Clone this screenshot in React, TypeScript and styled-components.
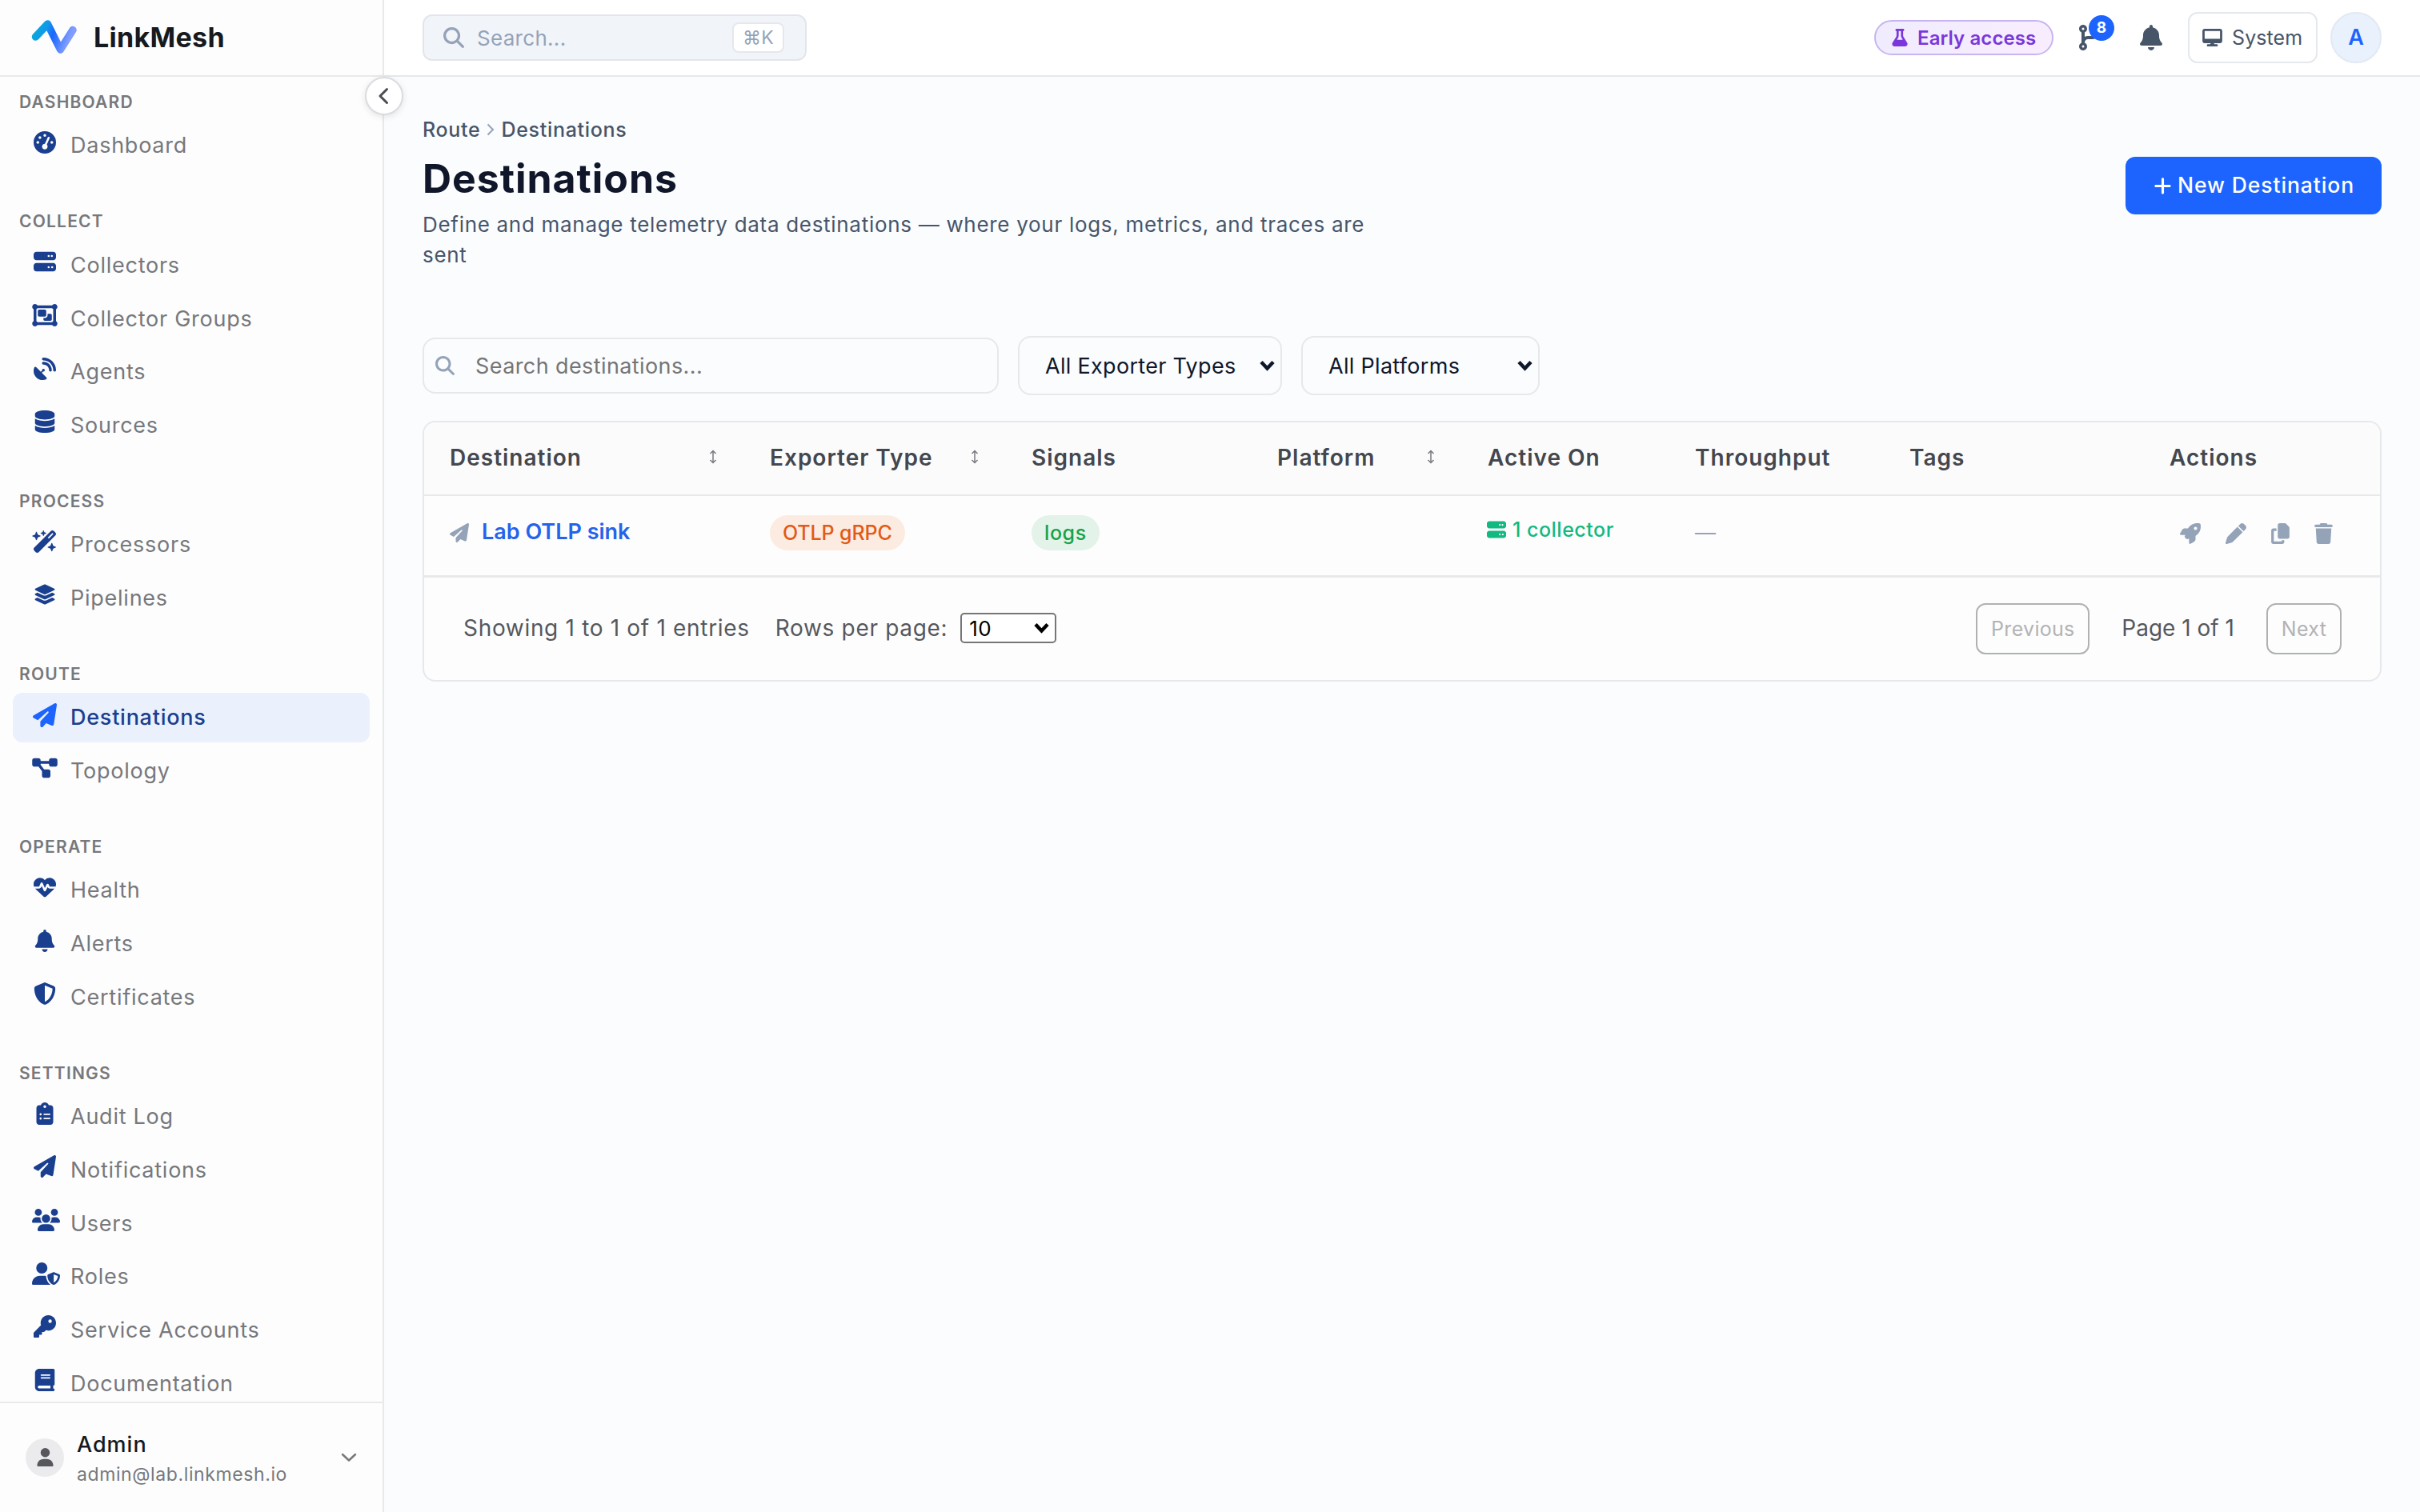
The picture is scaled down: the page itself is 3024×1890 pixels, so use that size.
import type { ReactNode } from "react";
import styled, { createGlobalStyle, css } from "styled-components";
import type { IconType } from "react-icons";
import {
  FaBell,
  FaBook,
  FaClipboardList,
  FaCodeBranch,
  FaCopy,
  FaDatabase,
  FaDesktop,
  FaDiagramProject,
  FaFlask,
  FaGaugeHigh,
  FaHeartPulse,
  FaKey,
  FaLayerGroup,
  FaMagnifyingGlass,
  FaObjectGroup,
  FaPaperPlane,
  FaPen,
  FaPlus,
  FaRocket,
  FaSatelliteDish,
  FaServer,
  FaShieldHalved,
  FaTrash,
  FaUser,
  FaUserShield,
  FaUsers,
  FaWandMagicSparkles,
} from "react-icons/fa6";

const colors = {
  primary: "#1d64ff",
  navy: "#1a3f8f",
  nav: "#76787c",
  slate: "#475569",
  muted: "#94a3b8",
  border: "#e6e8eb",
  line: "#e8e9ea",
};

const GlobalStyle = createGlobalStyle`
  * {
    box-sizing: border-box;
  }
  body {
    margin: 0;
    background: #fafcfe;
    font-family: Inter, "Liberation Sans", sans-serif;
  }
  button {
    font-family: inherit;
  }
`;

const Layout = styled.div`
  display: flex;
  width: 3024px;
  height: 1890px;
  overflow: hidden;
`;

/* sidebar */

const Sidebar = styled.aside`
  position: relative;
  display: flex;
  flex-direction: column;
  flex: none;
  width: 480px;
  height: 1890px;
  background: #fdfdfd;
  border-right: 2px solid ${colors.line};
`;

const Brand = styled.div`
  display: flex;
  align-items: center;
  flex: none;
  gap: 19px;
  height: 96px;
  padding: 0 0 2px 38px;
  border-bottom: 2px solid ${colors.line};
  font-size: 34px;
  font-weight: 700;
  letter-spacing: 0.3px;
  color: #16191f;
`;

const CollapseButton = styled.button`
  position: absolute;
  top: 96px;
  right: -26px;
  z-index: 2;
  display: flex;
  align-items: center;
  justify-content: center;
  width: 48px;
  height: 48px;
  padding: 0 3px 0 0;
  border: 2px solid #dadcde;
  border-radius: 50%;
  background: #fff;
  box-shadow: 0 2px 8px rgba(0, 0, 0, 0.1);
`;

const Nav = styled.nav`
  flex: 1;
  min-height: 0;
  overflow: hidden;
  padding: 17px 16px 0;
`;

const Section = styled.div`
  display: flex;
  flex-direction: column;
  gap: 4.7px;
  margin-bottom: 49.4px;
`;

const SectionLabel = styled.div`
  height: 30px;
  margin-bottom: 3.3px;
  padding-left: 8px;
  font-size: 21px;
  font-weight: 600;
  line-height: 30px;
  letter-spacing: 1.2px;
  color: ${colors.nav};
`;

const NavItem = styled.a<{ $active?: boolean }>`
  display: flex;
  align-items: center;
  gap: 16px;
  height: 62px;
  padding-left: 24px;
  border-radius: 12px;
  font-size: 27px;
  letter-spacing: 0.75px;
  color: ${colors.nav};

  ${(props) =>
    props.$active &&
    css`
      background: #eaf1fd;
      color: ${colors.navy};
      font-weight: 500;
    `}
`;

const NavIcon = styled.span<{ $size: number; $active?: boolean }>`
  width: 32px;
  height: 36px;
  line-height: 28px;
  text-align: center;
  white-space: nowrap;
  color: ${(props) => (props.$active ? colors.primary : colors.navy)};

  svg {
    width: ${(props) => props.$size}px;
    height: ${(props) => (props.$active ? 30 : 28)}px;
    vertical-align: top;
  }
`;

const Account = styled.div`
  display: flex;
  align-items: center;
  flex: none;
  gap: 16px;
  height: 138px;
  padding: 0 32px 1px;
  border-top: 2px solid ${colors.line};
`;

const AccountAvatar = styled.div`
  display: flex;
  align-items: center;
  justify-content: center;
  width: 48px;
  height: 48px;
  border-radius: 50%;
  background: #ebebed;
  color: #56585c;
  font-size: 23px;
`;

const AccountText = styled.div`
  flex: 1;
  padding-top: 4px;
`;

const AccountName = styled.div`
  font-size: 27px;
  font-weight: 500;
  line-height: 38px;
  letter-spacing: 1px;
  color: #16191f;
`;

const AccountMail = styled.div`
  font-size: 23px;
  line-height: 36px;
  letter-spacing: 0.6px;
  color: ${colors.nav};
`;

/* top bar */

const Main = styled.main`
  flex: 1;
  min-width: 0;
`;

const TopBar = styled.header`
  display: flex;
  align-items: center;
  height: 96px;
  padding: 0 48px;
  background: #fff;
  border-bottom: 2px solid ${colors.border};
`;

const GlobalSearch = styled.div`
  display: flex;
  align-items: center;
  width: 480px;
  height: 58px;
  margin-right: auto;
  padding: 0 26px 0 24px;
  border: 2px solid #e2e6eb;
  border-radius: 12px;
  background: #f1f5f9;
  color: ${colors.muted};
  font-size: 26px;
  letter-spacing: 0.3px;

  svg {
    margin-right: 16px;
  }
`;

const Kbd = styled.span`
  display: flex;
  align-items: center;
  justify-content: center;
  width: 65px;
  height: 38px;
  margin-left: auto;
  border: 2px solid #e5e7eb;
  border-radius: 8px;
  background: #fff;
  font-family: Inter, "DejaVu Sans", sans-serif;
  font-size: 23px;
`;

const EarlyAccess = styled.div`
  display: flex;
  align-items: center;
  gap: 11px;
  width: 224px;
  height: 44px;
  padding-left: 19px;
  border: 2px solid #c7b5f0;
  border-radius: 22px;
  background: linear-gradient(90deg, #f0ecfe, #f8edfe);
  color: #7a37da;
  font-size: 24px;
  font-weight: 600;
  letter-spacing: 0.1px;
  white-space: nowrap;
`;

const IconButton = styled.button`
  position: relative;
  display: flex;
  align-items: center;
  padding: 0;
  border: 0;
  background: none;
  color: ${colors.slate};

  svg {
    width: 28px;
    height: 32px;
  }
`;

const Count = styled.span`
  position: absolute;
  top: -12px;
  left: 12px;
  width: 32px;
  height: 32px;
  border-radius: 50%;
  background: ${colors.primary};
  color: #fff;
  font-size: 19px;
  font-weight: 700;
  line-height: 32px;
  text-align: center;
`;

const ThemeButton = styled.button`
  display: flex;
  align-items: center;
  gap: 12px;
  width: 162px;
  height: 64px;
  padding: 0 0 0 16px;
  border: 2px solid #e5e8ec;
  border-radius: 12px;
  background: #fff;
  color: ${colors.slate};
  font-size: 25px;
  letter-spacing: 0.1px;

  svg {
    width: 25px;
    height: 22px;
  }
`;

const Avatar = styled.div`
  width: 64px;
  height: 64px;
  border: 2px solid #e2e9f3;
  border-radius: 50%;
  background: #e9f1fd;
  color: ${colors.primary};
  font-size: 27px;
  font-weight: 600;
  line-height: 60px;
  text-align: center;
`;

const TopActions = styled.div`
  display: flex;
  align-items: center;
  height: 64px;

  ${IconButton}:nth-child(2) {
    margin-left: 32px;
  }
  ${IconButton}:nth-child(3) {
    margin-left: 48px;
  }
  ${ThemeButton} {
    margin: 0 16px 0 32px;
  }
`;

/* page */

const Page = styled.div`
  padding: 46px 48px 0;
`;

const Breadcrumb = styled.div`
  display: flex;
  align-items: center;
  gap: 8px;
  height: 40px;
  font-size: 25px;
  font-weight: 500;
  letter-spacing: 0.7px;
  color: ${colors.slate};
`;

const PageHead = styled.div`
  display: flex;
  justify-content: space-between;
  align-items: flex-start;
  height: 240px;
`;

const Title = styled.h1`
  margin: 9px 0 7px;
  font-size: 50px;
  font-weight: 700;
  line-height: 64px;
  letter-spacing: 0.95px;
  color: #10172a;
`;

const Description = styled.p`
  width: 1200px;
  margin: 0;
  font-size: 26px;
  line-height: 38.4px;
  letter-spacing: 0.7px;
  color: ${colors.slate};
`;

const PrimaryButton = styled.button`
  display: flex;
  align-items: center;
  justify-content: center;
  gap: 6px;
  width: 320px;
  height: 72px;
  margin-top: 14px;
  padding: 0 0 3px;
  border: 0;
  border-radius: 12px;
  background: ${colors.primary};
  color: #fff;
  font-size: 26.5px;
  font-weight: 500;
  letter-spacing: 0.9px;

  svg {
    width: 25px;
    height: 25px;
    margin-top: 4px;
  }
`;

const Filters = styled.div`
  display: flex;
  align-items: center;
  gap: 24px;
  height: 74px;
  margin-top: -2px;
`;

const TableSearch = styled.div`
  display: flex;
  align-items: center;
  gap: 26px;
  width: 720px;
  height: 70px;
  padding-left: 14px;
  border: 2px solid ${colors.border};
  border-radius: 16px;
  color: #757575;
  font-size: 27px;
  letter-spacing: 0.4px;

  svg {
    color: ${colors.muted};
  }
`;

const SelectBox = styled.div<{ $width: number; $compact?: boolean }>`
  display: flex;
  align-items: center;
  justify-content: space-between;
  width: ${(props) => props.$width}px;
  height: 74px;
  padding: 0 7px 0 32px;
  border: 2px solid ${colors.border};
  border-radius: 16px;
  color: #0f172a;
  font-size: 27px;
  letter-spacing: 0.3px;

  ${(props) =>
    props.$compact &&
    css`
      height: 38px;
      margin-bottom: 2px;
      padding: 0 7px 0 9px;
      border-color: #767676;
      border-radius: 5px;
      background: #fff;
      color: #000;
      font-size: 26px;
    `}
`;

const Card = styled.section`
  height: 326px;
  margin-top: 32px;
  overflow: hidden;
  border: 2px solid ${colors.border};
  border-radius: 16px;
  background: #fdfdfd;
`;

const TableRow = styled.div<{ $head?: boolean }>`
  display: grid;
  grid-template-columns: 400px 327px 307px 263px 259px 268px 325px 295px;
  align-items: center;
  height: ${(props) => (props.$head ? 92 : 102)}px;
  padding-bottom: ${(props) => (props.$head ? 0 : 8)}px;
  border-bottom: ${(props) => (props.$head ? 2 : 3)}px solid ${colors.line};
  background: ${(props) => (props.$head ? "#fbfbfb" : "#fdfdfd")};
`;

const HeadCell = styled.div`
  display: flex;
  align-items: center;
  justify-content: space-between;
  padding: 0 34px 2px 32px;
  font-size: 28px;
  font-weight: 600;
  letter-spacing: 1px;
  color: #44474e;

  svg {
    margin-bottom: 2px;
  }
`;

const Cell = styled.div`
  display: flex;
  align-items: center;
  padding-left: 32px;
  color: ${colors.muted};
  font-size: 26px;
`;

const NameLink = styled.a`
  margin: 0 0 2px 16px;
  color: #2563eb;
  font-size: 27px;
  font-weight: 600;
`;

const Pill = styled.span<{ $tone: "orange" | "green" }>`
  height: 44px;
  padding: 0 16px;
  border-radius: 22px;
  background: ${(props) => (props.$tone === "orange" ? "#fcebe1" : "#e3f3e9")};
  color: ${(props) => (props.$tone === "orange" ? "#e35a14" : "#16a34a")};
  font-size: 25px;
  font-weight: 500;
  line-height: 44px;
  letter-spacing: ${(props) => (props.$tone === "orange" ? -0.1 : 0.6)}px;
`;

const Collectors = styled.span`
  display: flex;
  align-items: center;
  gap: 8px;
  margin-left: -1px;
  padding-bottom: 8px;
  color: #12b981;
  font-size: 25px;
  font-weight: 500;
  letter-spacing: 0.5px;
`;

const RowActions = styled.div`
  display: flex;
  align-items: center;
  gap: 31px;
  padding: 3px 0 0 45px;
  color: ${colors.muted};

  svg {
    width: 26px;
    height: 26px;
  }
  svg:nth-child(n + 3) {
    width: 23px;
  }
`;

const TableFoot = styled.div`
  display: flex;
  align-items: center;
  height: 128px;
  padding: 0 48px 0 49px;
  font-size: 28px;
  color: #55585d;
`;

const FootText = styled.span<{ $gap: number }>`
  margin-right: ${(props) => props.$gap}px;
  padding-bottom: 3px;
  letter-spacing: 0.68px;
`;

const Pager = styled.div`
  display: flex;
  align-items: center;
  gap: 40px;
  margin-left: auto;
`;

const PageStatus = styled.span`
  padding-bottom: 3px;
`;

const PagerButton = styled.button<{ $width: number }>`
  width: ${(props) => props.$width}px;
  height: 64px;
  padding: 0;
  border: 2px solid #b0b1b3;
  border-radius: 12px;
  background: none;
  color: #b2b3b5;
  font-size: 25px;
  letter-spacing: 0.3px;
`;

const Logo = () => (
  <svg width="60" height="48" viewBox="0 0 60 48" fill="none">
    <defs>
      <linearGradient id="logo" x1="2" y1="12" x2="58" y2="34" gradientUnits="userSpaceOnUse">
        <stop offset="0" stopColor="#06b0d4" />
        <stop offset="0.3" stopColor="#1296ec" />
        <stop offset="0.46" stopColor="#1b66ff" />
        <stop offset="0.6" stopColor="#3f7bff" />
        <stop offset="0.8" stopColor="#7f9cff" />
        <stop offset="1" stopColor="#8ea2ff" />
      </linearGradient>
    </defs>
    <path
      d="M6.500 24 21.500 8 37.500 40 53 15.500"
      stroke="url(#logo)"
      strokeWidth="9.500"
      strokeLinecap="round"
      strokeLinejoin="round"
    />
  </svg>
);

const SortIcon = () => (
  <svg width="10" height="18" viewBox="0 0 10 18" fill="none" stroke="#77797e" strokeWidth="1.500">
    <path d="M5 2v14M1.500 5 5 1.500 8.500 5M1.500 13 5 16.500 8.500 13" />
  </svg>
);

const SelectArrow = () => (
  <svg width="19" height="14" viewBox="0 0 19 14" fill="none" stroke="currentColor" strokeWidth="4.500">
    <path d="M2 2.500 9.500 10.500 17 2.500" />
  </svg>
);

/* third value is the icon width, for the glyphs wider than 28px */
const sections: { label: string; items: [string, IconType, number?][] }[] = [
  { label: "DASHBOARD", items: [["Dashboard", FaGaugeHigh]] },
  {
    label: "COLLECT",
    items: [
      ["Collectors", FaServer],
      ["Collector Groups", FaObjectGroup, 32],
      ["Agents", FaSatelliteDish],
      ["Sources", FaDatabase],
    ],
  },
  {
    label: "PROCESS",
    items: [
      ["Processors", FaWandMagicSparkles, 32],
      ["Pipelines", FaLayerGroup],
    ],
  },
  {
    label: "ROUTE",
    items: [
      ["Destinations", FaPaperPlane, 30],
      ["Topology", FaDiagramProject, 32],
    ],
  },
  {
    label: "OPERATE",
    items: [
      ["Health", FaHeartPulse],
      ["Alerts", FaBell],
      ["Certificates", FaShieldHalved],
    ],
  },
  {
    label: "SETTINGS",
    items: [
      ["Audit Log", FaClipboardList],
      ["Notifications", FaPaperPlane],
      ["Users", FaUsers, 35],
      ["Roles", FaUserShield, 35],
      ["Service Accounts", FaKey],
      ["Documentation", FaBook],
    ],
  },
];

const columns: { title: string; sortable?: boolean }[] = [
  { title: "Destination", sortable: true },
  { title: "Exporter Type", sortable: true },
  { title: "Signals" },
  { title: "Platform", sortable: true },
  { title: "Active On" },
  { title: "Throughput" },
  { title: "Tags" },
  { title: "Actions" },
];

function Select({ width, compact, children }: { width: number; compact?: boolean; children: ReactNode }) {
  return (
    <SelectBox $width={width} $compact={compact}>
      {children}
      <SelectArrow />
    </SelectBox>
  );
}

function App() {
  const active = "Destinations";

  return (
    <Layout>
      <GlobalStyle />
      <Sidebar>
        <Brand>
          <Logo />
          LinkMesh
        </Brand>
        <CollapseButton>
          <svg width="14" height="22" viewBox="0 0 14 22" fill="none" stroke="#4b4d52" strokeWidth="3">
            <path d="M11.500 2.500 3 11l8.500 8.500" strokeLinecap="round" strokeLinejoin="round" />
          </svg>
        </CollapseButton>
        <Nav>
          {sections.map((section) => (
            <Section key={section.label}>
              <SectionLabel>{section.label}</SectionLabel>
              {section.items.map(([name, Icon, size = 28]) => (
                <NavItem key={name} $active={name === active}>
                  <NavIcon $size={size} $active={name === active}>
                    <Icon />
                  </NavIcon>
                  {name}
                </NavItem>
              ))}
            </Section>
          ))}
        </Nav>
        <Account>
          <AccountAvatar>
            <FaUser />
          </AccountAvatar>
          <AccountText>
            <AccountName>Admin</AccountName>
            <AccountMail>admin@lab.linkmesh.io</AccountMail>
          </AccountText>
          <svg width="20" height="12" viewBox="0 0 20 12" fill="none" stroke="#76787c" strokeWidth="2.500">
            <path d="M2 2l8 7.500L18 2" strokeLinecap="round" strokeLinejoin="round" />
          </svg>
        </Account>
      </Sidebar>

      <Main>
        <TopBar>
          <GlobalSearch>
            <FaMagnifyingGlass />
            Search...
            <Kbd>⌘K</Kbd>
          </GlobalSearch>
          <TopActions>
            <EarlyAccess>
              <FaFlask size={22} />
              Early access
            </EarlyAccess>
            <IconButton>
              <FaCodeBranch />
              <Count>8</Count>
            </IconButton>
            <IconButton>
              <FaBell />
            </IconButton>
            <ThemeButton>
              <FaDesktop />
              System
            </ThemeButton>
            <Avatar>A</Avatar>
          </TopActions>
        </TopBar>

        <Page>
          <Breadcrumb>
            Route
            <svg width="10" height="16" viewBox="0 0 10 16" fill="none" stroke="#94a3b8" strokeWidth="2">
              <path d="M1.500 1.500 8 8l-6.500 6.500" />
            </svg>
            Destinations
          </Breadcrumb>
          <PageHead>
            <div>
              <Title>Destinations</Title>
              <Description>
                Define and manage telemetry data destinations — where your logs, metrics, and traces are sent
              </Description>
            </div>
            <PrimaryButton>
              <FaPlus />
              New Destination
            </PrimaryButton>
          </PageHead>

          <Filters>
            <TableSearch>
              <FaMagnifyingGlass size={24} />
              Search destinations...
            </TableSearch>
            <Select width={330}>All Exporter Types</Select>
            <Select width={298}>All Platforms</Select>
          </Filters>

          <Card>
            <TableRow $head>
              {columns.map((column) => (
                <HeadCell key={column.title}>
                  {column.title}
                  {column.sortable && <SortIcon />}
                </HeadCell>
              ))}
            </TableRow>
            <TableRow>
              <Cell>
                <FaPaperPlane size={24} />
                <NameLink>Lab OTLP sink</NameLink>
              </Cell>
              <Cell>
                <Pill $tone="orange">OTLP gRPC</Pill>
              </Cell>
              <Cell>
                <Pill $tone="green">logs</Pill>
              </Cell>
              <Cell />
              <Cell>
                <Collectors>
                  <FaServer size={24} />1 collector
                </Collectors>
              </Cell>
              <Cell>—</Cell>
              <Cell />
              <RowActions>
                <FaRocket />
                <FaPen />
                <FaCopy />
                <FaTrash />
              </RowActions>
            </TableRow>
            <TableFoot>
              <FootText $gap={32}>Showing 1 to 1 of 1 entries</FootText>
              <FootText $gap={16}>Rows per page:</FootText>
              <Select width={120} compact>
                10
              </Select>
              <Pager>
                <PagerButton $width={142}>Previous</PagerButton>
                <PageStatus>Page 1 of 1</PageStatus>
                <PagerButton $width={94}>Next</PagerButton>
              </Pager>
            </TableFoot>
          </Card>
        </Page>
      </Main>
    </Layout>
  );
}

export default App;
